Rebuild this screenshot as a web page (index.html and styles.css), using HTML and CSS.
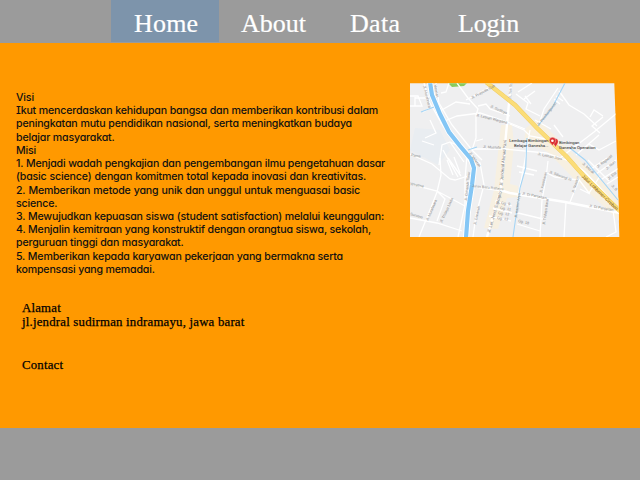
FILE: index.html
```html
<!DOCTYPE html>
<html lang="id">
<head>
<meta charset="utf-8">
<title>Ganesha Operation</title>
<link rel="stylesheet" href="styles.css">
</head>
<body>
<nav class="nav">
<a class="tab active">Home</a><a class="tab">About</a><a class="tab data">Data</a><a class="tab login">Login</a>
</nav>
<main class="main">
<div class="top">
<section class="mission">
<p style="width:18px">Visi</p>
<p style="width:362px">Ikut mencerdaskan kehidupan bangsa dan memberikan kontribusi dalam</p>
<p style="width:336px">peningkatan mutu pendidikan nasional, serta meningkatkan budaya</p>
<p style="width:98px">belajar masyarakat.</p>
<p style="width:19px">Misi</p>
<p style="width:369px">1. Menjadi wadah pengkajian dan pengembangan ilmu pengetahuan dasar</p>
<p style="width:350px">(basic science) dengan komitmen total kepada inovasi dan kreativitas.</p>
<p style="width:344px">2. Memberikan metode yang unik dan unggul untuk menguasai basic</p>
<p style="width:41px">science.</p>
<p style="width:368px">3. Mewujudkan kepuasan siswa (student satisfaction) melalui keunggulan:</p>
<p style="width:355px">4. Menjalin kemitraan yang konstruktif dengan orangtua siswa, sekolah,</p>
<p style="width:167px">perguruan tinggi dan masyarakat.</p>
<p style="width:327px">5. Memberikan kepada karyawan pekerjaan yang bermakna serta</p>
<p style="width:138px">kompensasi yang memadai.</p>
</section>
<svg class="map" viewBox="410 83 210 154" width="210" height="154">
<defs><clipPath id="edge"><path d="M410 83.3H614.3L616 130L618 185L619.3 237H410Z"/></clipPath></defs>
<g clip-path="url(#edge)">
<rect class="land" x="410" y="83" width="210" height="154"/>
<path class="block" d="M501 125H512L514 145L510 184L518 186V197L507 198L498 229L484 228L494 190ZM526 128L537 119L551 132L567 148L585 165L620 199V222L600 203L575 180L548 152L524 141Z"/>
<path class="tint" d="M415 128L440 130L450 150L438 165L410 150Z"/>
<path class="park" d="M448 83H467L464 86L452 87Z"/>
<g class="road">
<path d="M424 83L430 103L443 126L467 155L480 163L484 185L476 215L473 237"/>
<path d="M436 83L439 103L452 125L472 150L482 160"/>
<path d="M410 106H422L418 96H410M415 97V106M423 112L430 108M427 98H415M410 154L432 164L450 179L455 180L468 176"/>
<path d="M440 123L457 116L480 113L510 123L525 129M457 83L468 98L478 109L476 115L476 138L472 150M466 100L490 87M478 106L486 104L490 109L510 116"/>
<path d="M470 104L456 102L440 111M476 141L483 139M425 138L436 133L430 120M439 165L442 145L450 142L464 162M450 142L459 146L470 163M443 150L458 177M448 158L461 176M422 141L434 145"/>
<path d="M470 149L505 149L546 153L572 162M440 158L441 175L437 192L430 210L419 237M410 184L437 191L465 206M437 191L445 199L437 221M410 218L437 223L462 231M467 155L465 180L465 205L458 237"/>
<path d="M471 186L500 190L510 193L565 202L620 213M511 83L509 103L505 145L501 188L487 237" class="wide"/>
<path d="M510 124L524 130L530 136L546 139M530 130L525 160L518 197M535 120L551 129M539 124L544 109L558 88M554 99L560 104M556 96L563 101M516 94L528 103L526 109L540 116M518 92L532 83M524 99L535 91M531 104L525 96M559 91L569 105L584 114L597 126M590 117L594 110L603 116M603 117L592 126L600 133M560 158L594 132L617 113M576 155L599 135M589 144L599 150L616 141"/>
<path d="M545 172L555 177L579 180L570 202M548 161L546 178L542 200L540 237M566 202L564 237M518 213L543 219M517 224L540 231M517 166L537 171M519 172L534 175M577 177L589 193L600 176M580 189L590 194M560 152L585 172L617 206M588 160L609 181M591 169L607 158M596 174L616 160M602 179L619 168M607 184L618 177M613 210L616 232L606 237"/>
<path d="M447 160L453 175M454 157L460 173M495 201L512 206M493 208L512 213M489 216L511 221M554 125L563 137M449 83L446 92L441 93"/>
</g>
<path class="stream" d="M565 83L552 108L537 127M527 138L525.7 168L520 188L513 237M421 112L434 107M468 150L477 147M570 148L585 160L618 200"/>
<path class="bank" d="M430 82L432 95L440 114L449 132L460 146L471 159L474 168L472 185L468 211L466 238"/>
<path class="river" d="M430 82L432 95L440 114L449 132L460 146L471 159L474 168L472 185L468 211L466 238"/>
<path class="hwedge" d="M486 82L515 105L537 128L567 157L583 175L621 212"/>
<path class="hw" d="M486 82L515 105L537 128L567 157L583 175L621 212"/>
<g class="lbl">
<text transform="translate(423 86) rotate(76)">Jl. Murahnara</text>
<text transform="translate(434 85) rotate(79)">Veteran</text>
<text transform="translate(472 99) rotate(-28)">Jl. Prayuda Gab</text>
<text transform="translate(490 107) rotate(24)">Jl. Sudibyo</text>
<text transform="translate(476 116) rotate(14)">Jl. Letnan Wargana</text>
<text transform="translate(483 148) rotate(3)">Jl. Mustofa</text>
<text transform="translate(511 99) rotate(-86)">Jl. Yos Su</text>
<text transform="translate(539 126) rotate(-52)">Jl. Pembangunan</text>
<text transform="translate(537.5 155) rotate(12)">Jl. Letnan Joyo</text>
<text transform="translate(467 201) rotate(-84)">Jl. Cimanuk Timur</text>
<text transform="translate(472 187) rotate(6)">Jalan Baru Rahayu</text>
<text transform="translate(410 185) rotate(10)">Wiratma</text>
<text transform="translate(410 215) rotate(16)">Suratno</text>
<text transform="translate(411 156) rotate(10)">Pame</text>
<text transform="translate(428 221) rotate(-66)">Jl. Murahnara</text>
<text transform="translate(442 223) rotate(-65)">Jl. Tridaya Linda</text>
<text transform="translate(476 225) rotate(-78)">Jl. Cimanuk</text>
<text transform="translate(469 153) rotate(55)">Jl. Veteran</text>
<text transform="translate(549 173) rotate(20)">Jl. Siliwangi III</text>
<text transform="translate(542 193) rotate(-76)">Jl. Kembaran</text>
<text transform="translate(574 193) rotate(-72)">Jl. Stasiun</text>
<text transform="translate(522 194.5) rotate(11)">Jl. Di Panjaitan</text>
<text transform="translate(589 207) rotate(10)">Jl. Di Panjaitan</text>
<text transform="translate(517 218) rotate(-82)">Jl. Kapten Arya</text>
<text transform="translate(545 225) rotate(-82)">Jl. Tridaya Barat</text>
<text transform="translate(518 222) rotate(12)">Gg. 18</text>
<text transform="translate(582 164) rotate(42)">Jl. Merak</text>
<text transform="translate(598 168) rotate(-38)">Jl. Rajawali</text>
<text transform="translate(607 170) rotate(-42)">Jl. Nuri</text>
<text transform="translate(609 180) rotate(-40)">Jl. Ela</text>
<text transform="translate(611 186) rotate(45)">Jl. B</text>
<text transform="translate(501 204) rotate(8)">Gg. 9</text>
<text transform="translate(500 209) rotate(8)">Gg. 11</text>
<text transform="translate(498 214) rotate(8)">Gg. 12</text>
<text transform="translate(497 219) rotate(8)">Gg. 13</text>
</g>
<g class="lbl major">
<text transform="translate(502.5 186) rotate(-85)">Jl. Jenderal Ahmad Yani</text>
<text transform="translate(490 233) rotate(-74)">Jl. Let. Jend. Suprapto</text>
</g>
<text class="lbl highway" transform="translate(581.5 177) rotate(44)">Jalur Lohbener-Cirebon</text>
<g class="place">
<text x="548.5" y="142" text-anchor="end">Lembaga Bimbingan</text>
<text x="548.5" y="147" text-anchor="end">Belajar Ganesha...</text>
<text x="559" y="143.5">Bimbingan</text>
<text x="559" y="148.5">Ganesha Operation</text>
</g>
<path class="pin" d="M555.5 147.5C554.5 144 552 143.5 552 141.5A3.1 3.1 0 0 1 558.2 141.5C558.2 144 556.5 144.5 555.5 147.5Z"/>
<path class="pin" d="M552.5 146C552 143.5 549.3 143 549.3 140.5A3.2 3.2 0 0 1 555.7 140.5C555.7 143.5 553 143.5 552.5 146Z"/>
<circle class="dot" cx="552.4" cy="140.8" r="1.3"/>
</g>
</svg>
</div>
<section class="info">
<p class="addr">Alamat</p>
<p class="addr street">jl.jendral sudirman indramayu, jawa barat</p>
<p class="addr contact">Contact</p>
</section>
</main>
<footer class="footer"></footer>
</body>
</html>
```
FILE: styles.css
```css
* { box-sizing: border-box; }
body { margin: 0; width: 640px; height: 480px; overflow: hidden; background: #9b9b9b; display: flex; flex-direction: column; }
p { margin: 0; white-space: nowrap; }
.nav { height: 43px; background: #9b9b9b; display: flex; align-items: flex-start; padding-left: 111px; }
.tab { width: 108px; height: 42px; padding-left: 22px; color: #fff; font: 26px/48px "Liberation Serif", serif; -webkit-text-stroke: .2px #fff; }
.tab.active { background: #7d94ab; padding-left: 23px; letter-spacing: .2px; }
.tab.data { padding-left: 23px; letter-spacing: .3px; }
.tab.login { padding-left: 23px; letter-spacing: -0.2px; }
.main { height: 385px; background: #ff9900; }
.top { display: flex; height: 211px; align-items: flex-start; padding: 40px 20px 0 16px; }
.mission { width: 394px; padding-top: 8px; color: #111; font: 500 10.6px/13.22px Inter, sans-serif; font-feature-settings: "cv11", "cv08"; letter-spacing: -.17px; }
.mission p { text-align: justify; text-align-last: justify; }
.map { display: block; flex: none; }
.info { padding: 47px 0 0 22px; color: #000; font: 12.8px/14px "Liberation Serif", serif; letter-spacing: .21px; -webkit-text-stroke: .25px #000; }
.contact { margin-top: 29px; }
.footer { flex: 1; background: #9b9b9b; }
.land { fill: #efeff0; }
.block { fill: #f7f0e1; }
.tint { fill: #e9edf1; }
.park { fill: #8acb5c; }
.road { fill: none; stroke: #fff; stroke-width: 1.3; }
.road .wide { stroke-width: 2.4; }
.stream { fill: none; stroke: #a5d5f5; stroke-width: 1.1; }
.bank { fill: none; stroke: #fff; stroke-width: 6; }
.river { fill: none; stroke: #84c6f5; stroke-width: 4.2; }
.hwedge { fill: none; stroke: #f0cb62; stroke-width: 4.4; }
.hw { fill: none; stroke: #fbdd78; stroke-width: 3.4; }
.lbl { font: 3.7px "Liberation Sans", sans-serif; fill: #888; }
.major { font-size: 4.3px; fill: #777; }
.highway { font-size: 4.6px; fill: #76552a; }
.place { font: 4.3px Roboto, sans-serif; fill: #222; }
.pin { fill: #dc2f31; stroke: #fff; stroke-width: .35; }
.dot { fill: #fff; }
```
